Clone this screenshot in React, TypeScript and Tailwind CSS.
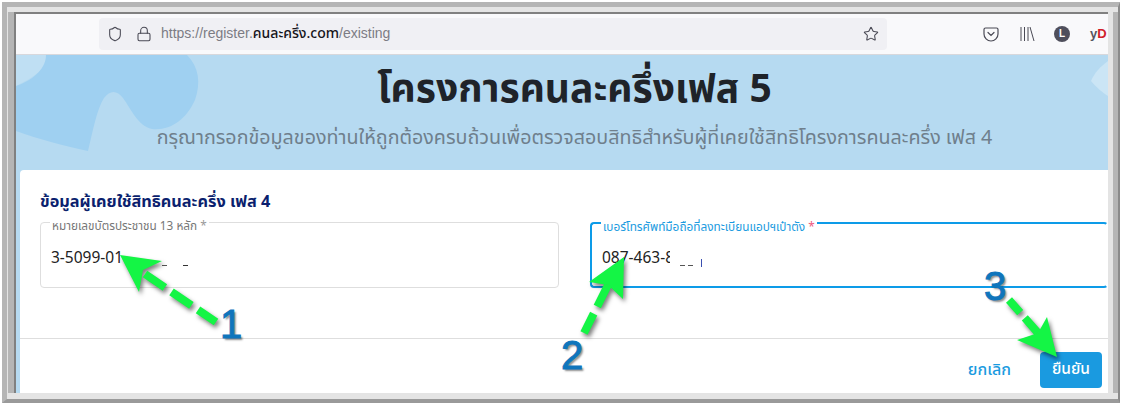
import type { ReactNode } from "react";
import { Lock, Shield, Star } from "lucide-react";

const thai = "font-['Noto_Sans_Thai','Noto_Sans','DejaVu_Sans',sans-serif]";

const Toolbar = () => (
  <div className="flex h-[41px] shrink-0 items-center border-b border-[#d8d8dc] bg-[#f9f9fb] pb-[1px] pl-[83px]">
    <div className="flex h-[32px] w-[788px] items-center rounded bg-[#f0f0f4] pl-[8px] pr-[8px]">
      <Shield className="h-[16px] w-[16px] text-[#4a4a55]" strokeWidth={1.6} />
      <Lock className="ml-[13px] h-[16px] w-[16px] text-[#4a4a55]" strokeWidth={1.6} />
      <div className="ml-[9px] flex-1 font-['Liberation_Sans',sans-serif] text-[14px] text-[#7c7c84]">
        https://register.<span className={`${thai} font-medium text-[#15141a]`}>คนละครึ่ง.com</span>/existing
      </div>
      <Star className="h-[16px] w-[16px] text-[#4a4a55]" strokeWidth={1.6} />
    </div>
    <div className="ml-[96px] flex items-center">
      <svg width="16" height="16" viewBox="0 0 16 16" fill="none" stroke="#4a4a55" strokeWidth="1.2">
        <path d="M2.500 2h11A1.500 1.500 0 0 1 15 3.500V8A7 7 0 0 1 1 8V3.500A1.500 1.500 0 0 1 2.500 2z" />
        <path d="M5 6.500l3 3 3-3" strokeLinecap="round" />
      </svg>
      <svg className="ml-[20px]" width="16" height="16" viewBox="0 0 16 16" fill="none" stroke="#4a4a55" strokeWidth="1">
        <path d="M2 1v14M5.500 1v14M9 1v14M11 1l4 14" />
      </svg>
      <div className="ml-[19px] flex h-[16px] w-[16px] items-center justify-center rounded-full bg-[#4f4f5c] font-['Liberation_Sans',sans-serif] text-[10px] font-bold text-white">
        L
      </div>
      <div className="ml-[20px] font-['Liberation_Sans',sans-serif] text-[13px] font-bold text-[#55555f]">
        y<span className="text-[#d0202a]">D</span>
      </div>
    </div>
  </div>
);

const Hero = () => (
  <div className="relative h-[115px] shrink-0 overflow-hidden bg-[#b6daf1] pl-[25px] text-center">
    {/* background blobs */}
    <svg className="absolute left-0 top-0" width="1092" height="115" viewBox="0 0 1092 115" fill="none">
      <path d="M0 0h30c2 10-4 18-30 31z" fill="#bfdff3" />
      <path d="M0 31C20 24 30 12 30 0h141c12 12 14 28 8 45-9 20-25 31-43 29-14-3-21-20-29-31-6-8-13-8-19 0-7 11-11 32-16 53-20-4-50-12-72-20z" fill="#9fd0f1" />
      <path d="M1092 6c-8 6-13 11-17 20 5 6 12 12 17 15z" fill="#cbe5f5" />
    </svg>
    <div className={`relative mt-[11px] text-[39px] font-bold leading-[50px] text-[#1f2329] ${thai}`}>
      โครงการคนละครึ่งเฟส 5
    </div>
    <div className={`relative mt-[9px] text-[19.700px] leading-[26px] text-[#6f7f8c] ${thai}`}>
      กรุณากรอกข้อมูลของท่านให้ถูกต้องครบถ้วนเพื่อตรวจสอบสิทธิสำหรับผู้ที่เคยใช้สิทธิโครงการคนละครึ่ง เฟส 4
    </div>
  </div>
);

const Field = ({ label, value, active, children }: { label: string; value: string; active?: boolean; children?: ReactNode }) => (
  <div
    className={`relative h-[66px] rounded ${
      active ? "border-2 border-[#0d9be8] border-r-transparent pl-[10px] pt-[24px]" : "border border-[#dedede] pl-[10px] pt-[25px]"
    }`}
  >
    <span
      className={`absolute left-[9px] top-[-5px] bg-white px-[2px] text-[11.800px] leading-[16px] ${thai} ${
        active ? "text-[#1b9be0]" : "text-[#777]"
      }`}
    >
      {label} <span className={active ? "text-[#ee5a7e]" : "text-[#999]"}>*</span>
    </span>
    <div className={`flex items-end whitespace-nowrap text-[15.500px] leading-[22px] text-[#222] ${thai}`}>
      {value}
      {children}
    </div>
  </div>
);

const Card = () => (
  <div className="flex flex-1 flex-col rounded-tl bg-white">
    <div className={`pl-[20px] pt-[22px] text-[16.300px] font-bold leading-[20px] text-[#0b1f6e] ${thai}`}>
      ข้อมูลผู้เคยใช้สิทธิคนละครึ่ง เฟส 4
    </div>
    <div className="mt-[10px] grid grid-cols-[519px_1fr] gap-[31px] pl-[20px]">
      <Field label="หมายเลขบัตรประชาชน 13 หลัก" value="3-5099-01">
        {/* what is left of the blanked-out digits */}
        <span className="mb-[4px] ml-[39px] h-px w-[5px] bg-[#555]" />
        <span className="mb-[4px] ml-[16px] h-px w-[5px] bg-[#333]" />
      </Field>
      <Field label="เบอร์โทรศัพท์มือถือที่ลงทะเบียนแอปฯเป๋าตัง" value="087-463-8" active>
        <span className="relative ml-[-4px] h-[22px] w-[5px] bg-white" />
        <span className="mb-[4px] ml-[5px] h-px w-[5px] bg-[#555]" />
        <span className="mb-[4px] ml-[3px] h-px w-[5px] bg-[#555]" />
        <span className="mb-[3px] ml-[8px] h-[8px] w-px bg-[#3a4fb0]" />
      </Field>
    </div>
    <div className="mt-[50px] flex flex-1 items-center justify-end border-t border-[#dedede] pr-[6px] pt-[8px]">
      <button className={`text-[16px] font-medium text-[#1b9be0] ${thai}`}>ยกเลิก</button>
      <button className={`ml-[29px] h-[36px] w-[62px] rounded bg-[#1a9ae0] text-[15.500px] font-medium text-white ${thai}`}>
        ยืนยัน
      </button>
    </div>
  </div>
);

// green dashed arrows drawn on top of the screenshot
const Arrows = () => (
  <svg className="absolute left-0 top-0 drop-shadow-[2px_3px_2px_rgba(0,0,0,0.5)]" width="1121" height="405" viewBox="0 0 1121 405" fill="none">
    <path d="M145 274L216 322" stroke="#14f545" strokeWidth="8" strokeDasharray="24 8" />
    <path d="M120 255L162 261 143 270 139 292z" fill="#14f545" />
    <path d="M608 285L584 333" stroke="#14f545" strokeWidth="8" strokeDasharray="24 8" />
    <path d="M624 257L623 299 608 285 589 282z" fill="#14f545" />
    <path d="M1038 333L1009 300" stroke="#14f545" strokeWidth="8" strokeDasharray="20 7" />
    <path d="M1057 357L1017 340 1038 333 1047 317z" fill="#14f545" />
  </svg>
);

const Num = ({ n, className }: { n: string; className: string }) => (
  <div
    className={`absolute font-['Liberation_Sans',sans-serif] text-[40px] leading-[40px] text-[#0f75bc] [-webkit-text-stroke:1px_#0f75bc] [text-shadow:2px_2px_2px_rgba(0,0,0,0.45)] ${className}`}
  >
    {n}
  </div>
);

const App = () => (
  <div className="relative h-[405px] w-[1121px] overflow-hidden bg-white pb-[2px] pl-[2px] pr-[1px] pt-[2px]">
    <div className="h-full w-full border-b-[4px] border-l-[5px] border-r-[2px] border-t-[5px] border-b-[#9a9a9a] border-l-[#b5b5b5] border-r-[#8a8a8a] border-t-[#b5b5b5] bg-[#e4e4e4] pb-[6px] pl-[1px] pt-[5px]">
      <div className="h-full w-full border-l-[6px] border-r-[5px] border-l-[#b5b5b5] border-r-[#b5b5b5] pr-[5px]">
        <div className="flex h-full w-full flex-col border-l-2 border-t-2 border-[#808080]">
          <Toolbar />
          <div className="flex flex-1 flex-col bg-[#b6daf1]">
            <Hero />
            <div className="flex flex-1 pl-[4px]">
              <Card />
            </div>
          </div>
        </div>
      </div>
    </div>
    <Arrows />
    <Num n="1" className="left-[220px] top-[304px]" />
    <Num n="2" className="left-[561px] top-[335px]" />
    <Num n="3" className="left-[984px] top-[266px]" />
  </div>
);

export default App;
